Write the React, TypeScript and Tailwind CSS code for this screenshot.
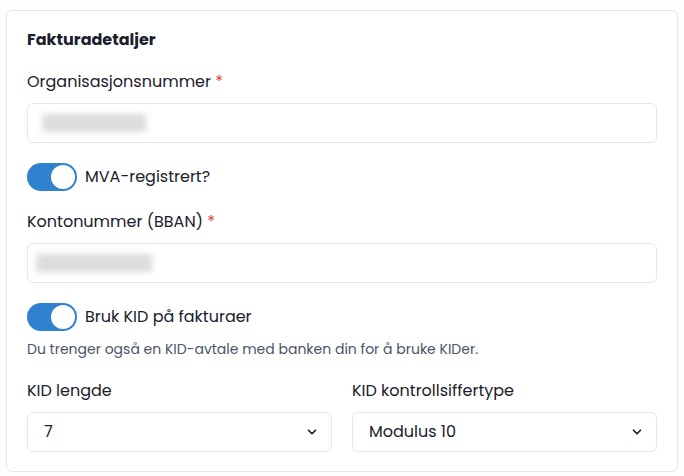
import { useState } from "react";

function Toggle({ label }: { label: string }) {
  const [on, setOn] = useState(true);
  return (
    <label className="flex items-center gap-2 cursor-pointer">
      <button
        type="button"
        onClick={() => setOn(!on)}
        className={`flex h-[28px] w-[50px] shrink-0 items-center rounded-full p-[2px] ${
          on ? "bg-[#3182ce] justify-end" : "bg-[#cbd5e0] justify-start"
        }`}
      >
        <span className="block h-[24px] w-[24px] rounded-full bg-white" />
      </button>
      <span className="text-[16px] leading-[24px] text-[#1a202c]">{label}</span>
    </label>
  );
}

function Blurred({ width, offset }: { width: string; offset: string }) {
  return (
    <div className={`h-[40px] w-full rounded-md border border-[#e2e8f0] bg-white flex items-center ${offset}`}>
      <div className={`h-[18px] ${width} bg-[#dcdcdc] blur-[3px]`} />
    </div>
  );
}

function Chevron() {
  return (
    <svg width="14" height="14" viewBox="0 0 24 24" fill="none" stroke="#1a202c" strokeWidth="3" strokeLinecap="round" strokeLinejoin="round">
      <path d="M6 9l6 6 6-6" />
    </svg>
  );
}

function SelectBox({ value }: { value: string }) {
  return (
    <div className="flex h-[40px] w-full items-center justify-between rounded-md border border-[#e2e8f0] bg-white pl-4 pr-[12px] text-[16px] text-[#1a202c]">
      <span>{value}</span>
      <Chevron />
    </div>
  );
}

export default function App() {
  return (
    <div
      className="min-h-screen bg-[#fdfdfd] px-[6px] pt-[10px]"
      style={{ fontFamily: "Poppins, 'Noto Sans', sans-serif" }}
    >
      <div className="w-[672px] rounded-md border border-[#e2e8f0] bg-white px-[20px] pt-[17px] pb-[19px]">
        <h2 className="text-[16px] font-bold leading-[24px] text-[#1a202c]">Fakturadetaljer</h2>

        <div className="mt-[18px] text-[16px] leading-[24px] text-[#1a202c]">
          Organisasjonsnummer <span className="text-[#e53e3e]">*</span>
        </div>
        <div className="mt-[9px]">
          <Blurred width="w-[104px]" offset="pl-[14px]" />
        </div>

        <div className="mt-[20px]">
          <Toggle label="MVA-registrert?" />
        </div>

        <div className="mt-[19px] text-[16px] leading-[24px] text-[#1a202c]">
          Kontonummer (BBAN) <span className="text-[#e53e3e]">*</span>
        </div>
        <div className="mt-[9px]">
          <Blurred width="w-[116px]" offset="pl-[8px]" />
        </div>

        <div className="mt-[20px]">
          <Toggle label="Bruk KID på fakturaer" />
        </div>
        <p className="mt-[8px] text-[14px] leading-[20px] text-[#4a5568]">
          Du trenger også en KID-avtale med banken din for å bruke KIDer.
        </p>

        <div className="mt-[20px] grid grid-cols-2 gap-[20px]">
          <div>
            <div className="text-[16px] leading-[24px] text-[#1a202c]">KID lengde</div>
            <div className="mt-[9px]">
              <SelectBox value="7" />
            </div>
          </div>
          <div>
            <div className="text-[16px] leading-[24px] text-[#1a202c]">KID kontrollsiffertype</div>
            <div className="mt-[9px]">
              <SelectBox value="Modulus 10" />
            </div>
          </div>
        </div>
      </div>
    </div>
  );
}
